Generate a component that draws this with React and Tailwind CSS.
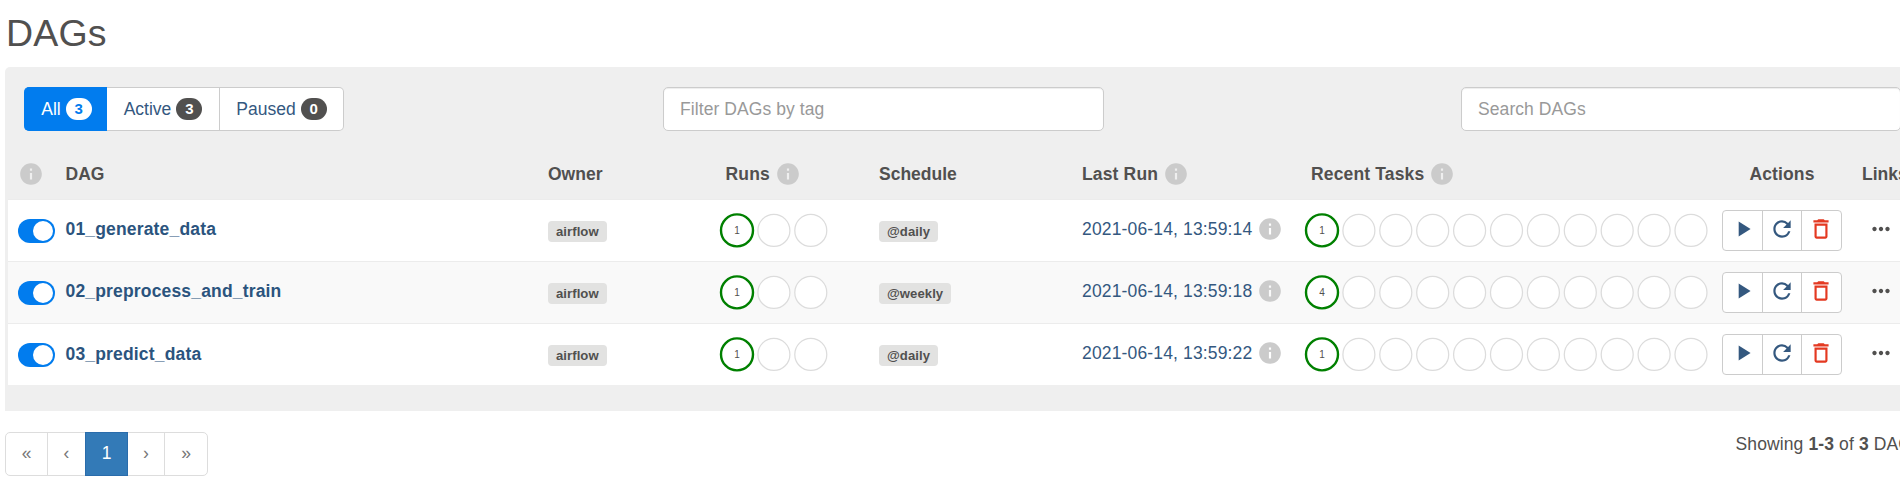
import React from "react";
import { MdPlayArrow, MdRefresh, MdDeleteOutline, MdMoreHoriz, MdInfo } from "react-icons/md";

const dags = [
  { name: "01_generate_data", schedule: "@daily", last: "2021-06-14, 13:59:14", runs: 1, tasks: 1 },
  { name: "02_preprocess_and_train", schedule: "@weekly", last: "2021-06-14, 13:59:18", runs: 1, tasks: 4 },
  { name: "03_predict_data", schedule: "@daily", last: "2021-06-14, 13:59:22", runs: 1, tasks: 1 },
];

const columns =
  "grid grid-cols-[47.5px_482.5px_170.5px_160.5px_203px_222px_418px_120px_80px] items-center pl-[10px]";

function Info() {
  return <MdInfo className="size-[26px] shrink-0 text-[#cbcbcb]" />;
}

function Header({ children, info, className = "" }) {
  return (
    <div className={"flex items-center gap-[5px] " + className}>
      <span className="pt-px">{children}</span>
      {info && <Info />}
    </div>
  );
}

function Circles({ count, value }) {
  const width = count * 36.9 + 2;
  return (
    <svg className="block" width={width} height="40" viewBox={`0 0 ${width} 40`}>
      {Array.from({ length: count }, (_, i) => (
        <circle
          key={i}
          cx={18 + i * 36.9}
          cy="19.4"
          r="16"
          fill="#fff"
          stroke={i === 0 ? "#008000" : "#dcdcdc"}
          strokeWidth={i === 0 ? 2.4 : 1.25}
        />
      ))}
      <text x="18" y="23" textAnchor="middle" fontSize="10" fill="#51504f">
        {value}
      </text>
    </svg>
  );
}

function Tag({ children }) {
  return (
    <span className="mt-[2px] inline-flex h-[21px] items-center rounded-[4px] bg-[#e2e2e1] px-[8px] text-[13.125px] leading-none font-bold tracking-[0.06px] text-[#51504f]">
      {children}
    </span>
  );
}

function Toggle() {
  return (
    <span className="flex h-6 w-[37px] items-center justify-end rounded-full bg-[#017cee] pr-[2px]">
      <span className="size-5 rounded-full bg-white" />
    </span>
  );
}

function Filter({ label, count, active, className = "" }) {
  return (
    <div
      className={
        "flex items-center justify-center gap-[5px] border-y pb-px " +
        (active
          ? "border-[#017cee] bg-[#017cee] pl-[2px] text-white "
          : "border-r border-[#cccccc] bg-white text-[#34587f] ") +
        className
      }
    >
      <span className="pt-px">{label}</span>
      <span
        className={
          "flex h-[22px] w-[26px] items-center justify-center rounded-full text-[15px] leading-none font-bold " +
          (active ? "bg-white text-[#017cee]" : "bg-[#51504f] text-white")
        }
      >
        {count}
      </span>
    </div>
  );
}

function Row({ dag, index }) {
  return (
    <div
      className={
        columns +
        " ml-[3px] h-[62px] border-t border-[#ececec] " +
        (index % 2 ? "bg-[#f9f9f9]" : "bg-white")
      }
    >
      <Toggle />
      <span
        className={
          "font-bold tracking-[0.17px] text-[#2b547e] " + (index === 2 ? "pb-px" : "pb-[3px]")
        }
      >
        {dag.name}
      </span>
      <div className="flex">
        <Tag>airflow</Tag>
      </div>
      <Circles count={3} value={dag.runs} />
      <div className="flex">
        <Tag>{dag.schedule}</Tag>
      </div>
      <div className="flex items-center gap-[5px] pb-[3px] text-[#34587f]">
        <span className="tracking-[0.15px]">{dag.last}</span>
        <Info />
      </div>
      <Circles count={11} value={dag.tasks} />
      <div className="flex h-[41px] w-[120px] divide-x divide-[#ccc] rounded-[4px] border border-[#ccc] bg-white *:flex *:flex-1 *:items-center *:justify-center *:pb-[3px]">
        <span className="pl-px text-[#34587f]">
          <MdPlayArrow className="size-[26px]" />
        </span>
        <span className="text-[#34587f]">
          <MdRefresh className="size-[26px]" />
        </span>
        <span className="pr-px text-[#e43921]">
          <MdDeleteOutline className="size-[26px]" />
        </span>
      </div>
      <div className="pb-[3px] pl-[26px] text-[#51504f]">
        <MdMoreHoriz className="size-[26px]" />
      </div>
    </div>
  );
}

export default function App() {
  return (
    <div className="h-[500px] w-[1900px] overflow-hidden bg-white pl-[5px] font-['Liberation_Sans',Arial,sans-serif] text-[17.5px] leading-[25px] whitespace-nowrap text-[#51504f]">
      <h2 className="h-[67px] pt-[13px] pl-px text-[37.5px] leading-[41px] tracking-[0.2px]">DAGs</h2>

      <div className="h-[344px] w-[1935px] rounded-t-[5px] bg-[#efefef] pt-5">
        <div className="flex h-11 pl-[19px]">
          <div className="flex w-[320px]">
            <Filter label="All" count={3} active className="w-[83px] rounded-l-[5px]" />
            <Filter label="Active" count={3} className="w-[113px]" />
            <Filter label="Paused" count={0} className="w-[124px] rounded-r-[5px]" />
          </div>
          <div className="ml-[319px] flex w-[441px] items-center rounded-[5px] border border-[#ccc] bg-white pl-4 tracking-[0.08px] text-[#999] shadow-[inset_0_1px_1px_rgba(0,0,0,0.075)]">
            Filter DAGs by tag
          </div>
          <div className="ml-[357px] flex w-[440px] items-center rounded-[5px] border border-[#ccc] bg-white pl-4 tracking-[0.08px] text-[#999] shadow-[inset_0_1px_1px_rgba(0,0,0,0.075)]">
            Search DAGs
          </div>
        </div>

        <div className={columns + " ml-[3px] h-[68px] pt-[17px] font-bold"}>
          <Info />
          <Header>DAG</Header>
          <Header>Owner</Header>
          <Header info className="pl-[7px] tracking-[0.15px]">Runs</Header>
          <Header>Schedule</Header>
          <Header info className="tracking-[0.15px]">Last Run</Header>
          <Header info className="pl-[7px] tracking-[0.15px]">Recent Tasks</Header>
          <Header className="justify-center tracking-[0.15px]">Actions</Header>
          <Header className="pl-[20px]">Links</Header>
        </div>

        {dags.map((dag, i) => (
          <Row key={dag.name} dag={dag} index={i} />
        ))}
      </div>

      <div className="flex pt-[21px]">
        <div className="flex h-11 w-[203px] rounded-[5px] border border-[#ddd] text-[#777] *:flex *:items-center *:justify-center *:pb-[1px]">
          <span className="w-[41px]">«</span>
          <span className="w-[38px] border-l border-[#ddd]">‹</span>
          <span className="-my-px w-[43px] border border-[#2a6cab] bg-[#337ab7] text-white">1</span>
          <span className="w-[37px] border-r border-[#ddd]">›</span>
          <span className="w-[42px]">»</span>
        </div>
        <div className="ml-[1527.5px] tracking-[0.12px]">
          Showing <b>1-3</b> of <b>3</b> DAGs
        </div>
      </div>
    </div>
  );
}
